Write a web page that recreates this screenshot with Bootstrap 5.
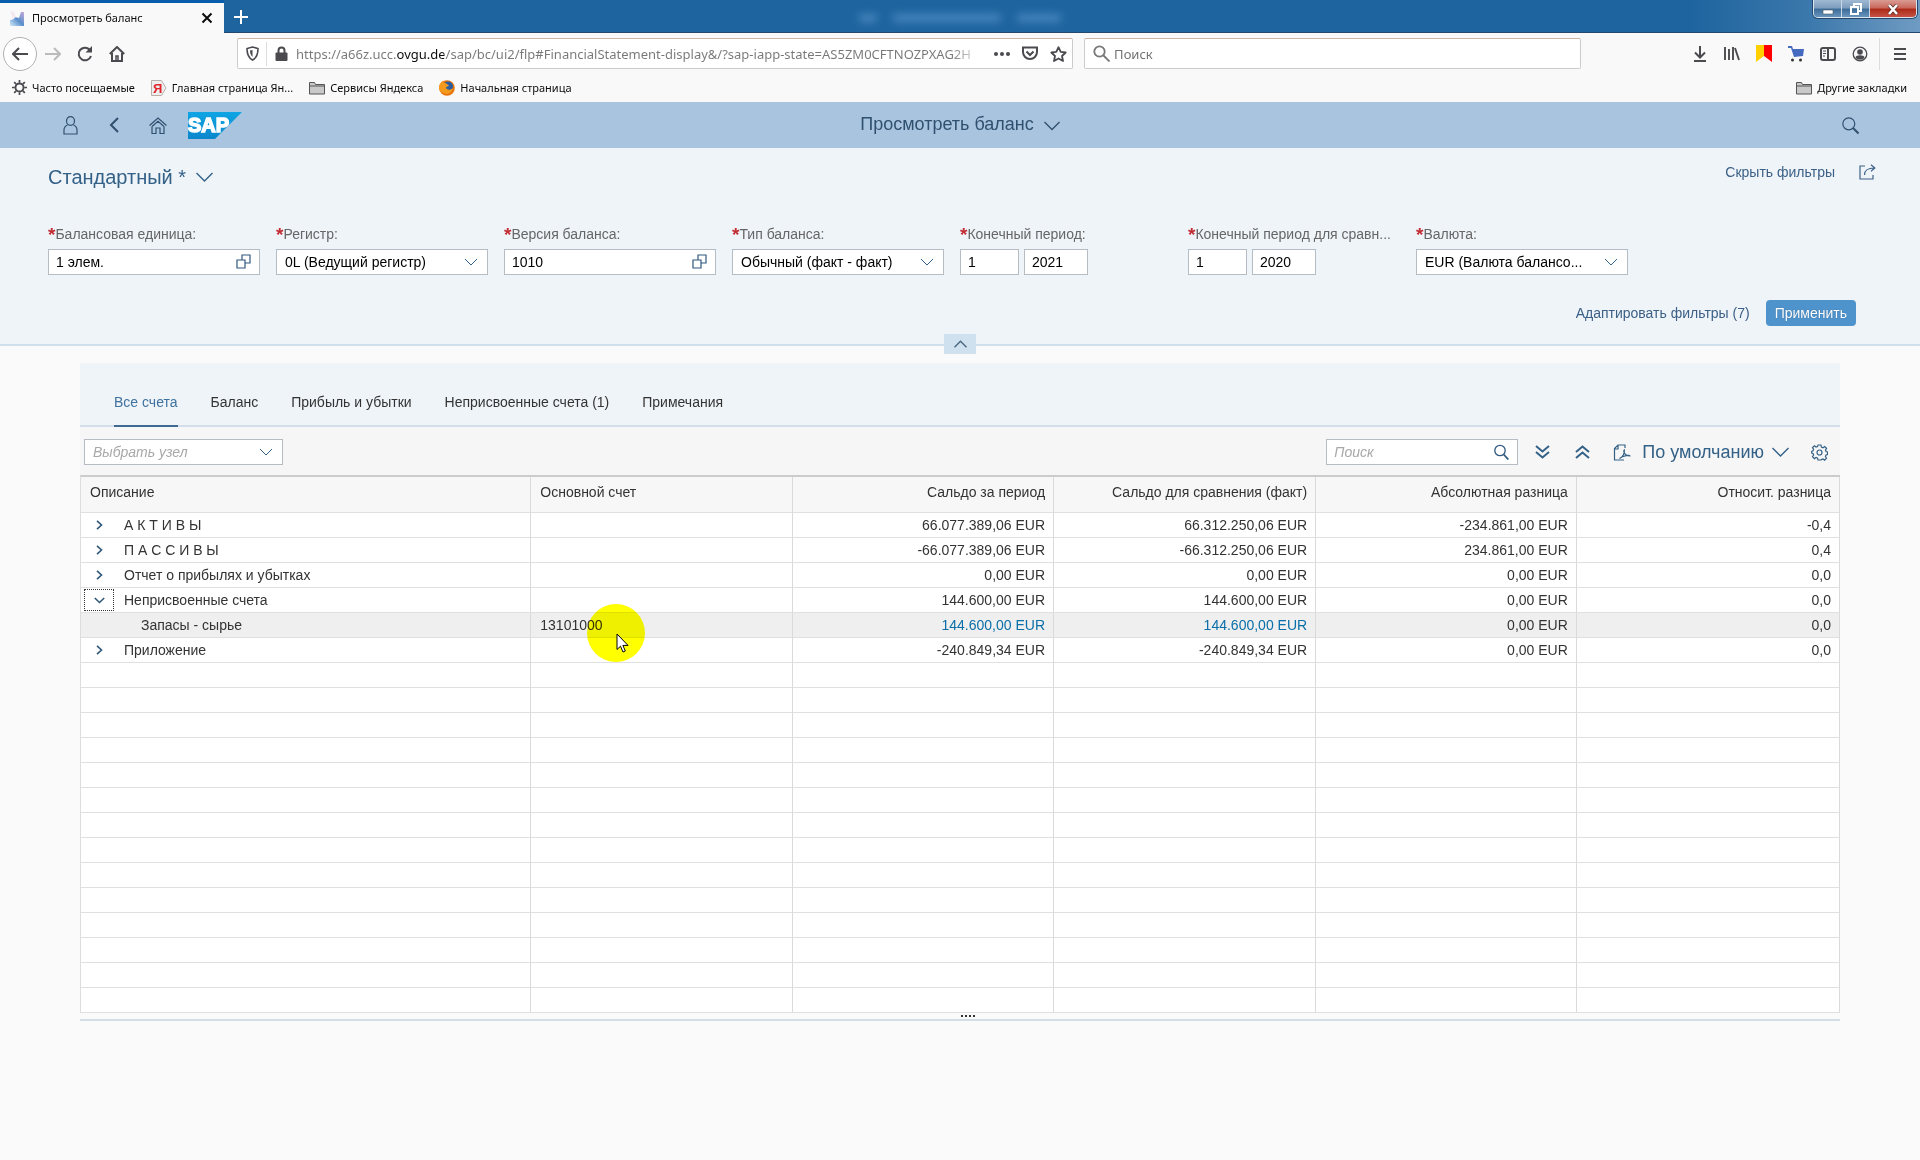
<!DOCTYPE html>
<html lang="ru">
<head>
<meta charset="utf-8">
<meta name="viewport" content="width=device-width, initial-scale=1">
<title>Просмотреть баланс</title>
<link rel="stylesheet" href="https://cdn.jsdelivr.net/npm/bootstrap@5.3.0/dist/css/bootstrap.min.css">
<style>
  :root { --ink:#333; --brand:#346187; --line:#e0e0e0; --panel:#eff4f9; --chrome:#f9f9fa; --chrome-ink:#4a4a4f; }
  body { background:#fafafa; color:var(--ink); font:14px/20px "Liberation Sans", Arial, sans-serif; min-height:100vh; }
  svg { display:block; flex:none; }
  button, input, select { font:inherit; }
  .plain-btn { border:0; background:none; padding:0; color:inherit; display:flex; align-items:center; justify-content:center; }
  .ln { fill:none; stroke:currentColor; }

  /* browser window */
  .browser { background:var(--chrome); color:#0c0c0d; font-family:"Noto Sans", "Open Sans", sans-serif; font-size:11px; }
  .title-strip { height:33px; background:linear-gradient(90deg,#1e649e 0,#1e649e 88%,#3a77ab 94%,#6f9bc2 100%); border-bottom:1px solid #25496d; position:relative; }
  .page-tab { width:224px; height:33px; background:var(--chrome); border-top:3px solid #0a5cad; padding:0 11px 0 10px; }
  .new-tab { width:34px; height:33px; color:#fff; }
  .blurred { left:0; right:0; top:14px; height:9px; filter:blur(4px); opacity:.75; }
  .blurred span { background:#5591c9; height:8px; }
  .win-ctl { border:1px solid #dbe6f0; border-top:0; border-radius:0 0 5px 5px; overflow:hidden; height:18px; margin-right:3px; color:#fff; box-shadow:0 0 0 1px #24476b; }
  .win-ctl button { height:18px; width:28px; background:linear-gradient(#9fb9d2 0,#7c9cbc 45%,#3c6b99 50%,#6f9bc0 100%); border-right:1px solid #c9d8e6; }
  .win-ctl button:last-child { width:46px; border-right:0; background:linear-gradient(#d99c93 0,#c9665a 45%,#ad2a17 50%,#c9574a 100%); }
  .nav-bar { height:39px; color:var(--chrome-ink); margin-top:1px; }
  .nav-left { width:237px; padding-left:3px; }
  .nav-left button { width:32px; height:32px; }
  .nav-left .back-btn { width:34px; height:34px; border:1px solid #b1b1b3; border-radius:50%; background:#fff; }
  .field-box { height:31px; background:#fff; border:1px solid #ccc; border-top-color:#c9b5a8; border-radius:2px; }
  .url-box { flex:836 1 0; }
  .find-box { flex:496 1 0; margin-left:11px; }
  .shield { width:29px; height:24px; border-right:1px solid #ddd; }
  .url-box button { width:28px; }
  .bare-input { border:0; outline:0; background:none; padding:0; min-width:0; flex:1; font-size:13px; }
  .bare-input::placeholder { color:#737373; opacity:1; }
  .url-input { -webkit-text-fill-color:transparent; color:transparent; -webkit-background-clip:text; background-clip:text;
    background-image:linear-gradient(90deg,#777 0,#777 101px,#0c0c0d 101px,#0c0c0d 148px,#777 148px,#777 calc(100% - 34px),#fff 100%); }
  .nav-right { width:339px; padding-right:1px; }
  .nav-right button { width:32px; height:32px; }
  .nav-right .menu-btn { width:40px; border-left:1px solid #ddd; margin-left:3px; }
  .bookmarks { height:29px; padding:0 13px 0 12px; gap:16px; }
  .bookmarks a { color:#0c0c0d; text-decoration:none; gap:5px; display:flex; align-items:center; white-space:nowrap; }

  /* shell header */
  .shell { height:46px; background:#a9c4df; color:#30506f; }
  .shell-side { flex:1 1 0; }
  .shell-side button { width:44px; height:44px; }
  .shell-title { font-size:18px; gap:10px; padding-bottom:2px; }

  /* filter bar */
  .filter-bar { background:var(--panel); border-bottom:2px solid #d0dfec; height:198px; padding:0 40px 0 48px; position:relative; }
  .variant { font-size:20px; line-height:24px; color:var(--brand); gap:10px; }
  .variant-row { height:57px; }
  .variant-tools { padding-bottom:10px; }
  .text-btn { color:#3c6086; }
  .filter-items { display:grid; grid-template-columns:repeat(8, 228px); padding-top:19px; }
  .filter-items .item { width:212px; }
  .filter-items label { display:block; height:20px; margin:0 0 5px; font-size:14px; line-height:20px; color:#666; white-space:nowrap; }
  .filter-items label::before { content:"*"; color:#c22d33; font-weight:bold; font-size:19px; line-height:16px; vertical-align:-2px; }
  .ctl { height:26px; border:1px solid #b5bcc4; border-radius:0; background-color:#fff; padding:0 7px; font-size:14px; line-height:20px; color:#000; min-height:0; }
  .ctl::placeholder { color:#a8a8a8; font-style:italic; opacity:1; }
  .period { width:59px; }
  .year { width:64px; }
  .period-pair { gap:5px; }
  select.ctl { padding-left:8px; padding-right:42px; text-overflow:ellipsis; background-repeat:no-repeat; background-position:right 9px center; background-size:14px 14px;
    --bs-form-select-bg-img:url("data:image/svg+xml,%3Csvg xmlns='http://www.w3.org/2000/svg' viewBox='0 0 14 14' fill='none' stroke='%23346187'%3E%3Cpath d='M1 4l6 6 6-6'/%3E%3C/svg%3E"); background-image:var(--bs-form-select-bg-img); }
  .with-help { position:relative; }
  .with-help button { position:absolute; right:9px; top:5px; color:#30597f; }
  .apply-btn { background:#4f93cc; color:#fff; border:0; border-radius:4px; height:26px; padding:0 9px; line-height:26px; text-shadow:0 0 1px #2b5f8f; }
  .filter-actions { padding:25px 24px 0 0; gap:16px; }
  .collapse-btn { position:absolute; left:50%; bottom:-10px; width:32px; height:20px; margin-left:-16px; background:#cfe0ee; color:#4a6680; }

  /* content */
  .content { margin:17px 80px 0; background:#f6f6f6; }
  .tab-strip { height:64px; background:var(--panel); border-bottom:2px solid #d3deea; padding:0 34px; gap:33px; }
  .tab-strip button { height:64px; padding-top:16px; border-bottom:2px solid transparent; }
  .tab-strip .active { color:#3f729f; border-color:#3f6a92; }
  .table-bar { height:48px; padding:2px 12px 0 4px; }
  .node-select { width:199px; font-style:italic; color:#a8a8a8; }
  .search-box { width:192px; }
  .bar-icon { width:40px; color:var(--brand); }
  .layout-btn { font-size:18px; color:var(--brand); gap:8px; }
  .gear-btn { margin-left:22px; color:var(--brand); }
  .ledger { width:100%; table-layout:fixed; border-collapse:separate; border-spacing:0; border-top:2px solid #ccc; border-left:1px solid #ddd; background:#fff; margin:0; }
  .ledger th, .ledger td { border-bottom:1px solid var(--line); border-right:1px solid #dadada; height:25px; padding:0 8px 0 9px; font-weight:400; line-height:20px; white-space:nowrap; }
  .ledger th { height:36px; background:#f7f7f7; padding-bottom:6px; }
  .ledger th:nth-child(n+3), .ledger td:nth-child(n+3) { text-align:right; }
  .ledger .picked td { background:#efefef; }
  .ledger td a { color:#0a6ea8; text-decoration:none; }
  .node { display:flex; align-items:center; gap:10px; height:24px; margin-left:-6px; }
  .node button { width:30px; height:22px; color:#2f5777; border:1px dotted transparent; }
  .node button.focused { border-color:#333; }
  .leaf { padding-left:51px; }
  .spot-cell { position:relative; }
  .spot { position:absolute; left:56px; top:-9px; z-index:2; mix-blend-mode:multiply; }
  .pointer { position:absolute; left:85px; top:20px; z-index:3; }
  .grip { height:8px; background:#fafafa; border-bottom:2px solid #d3dfe6; }
</style>
</head>
<body>
<header class="browser">
  <div class="title-strip d-flex align-items-start">
    <div class="blurred position-absolute d-flex justify-content-center gap-3">
      <span style="width:18px"></span><span style="width:108px"></span><span style="width:44px"></span>
    </div>
    <div class="page-tab d-flex align-items-center position-relative">
      <svg width="14" height="15" viewBox="0 0 14 15"><defs><linearGradient id="fav" x1="0" y1="1" x2="1" y2="0"><stop offset="0" stop-color="#d3ecf8"/><stop offset=".5" stop-color="#5a8fcc"/><stop offset="1" stop-color="#c7a9d8"/></linearGradient></defs><path d="M0 9c3 0 4-1 5-3l4 1 2-6h3v14H0z" fill="url(#fav)"/><path d="M0 0l4 1 2 5-3 2z" fill="#f3e8ee"/></svg>
      <span class="ms-1 flex-fill ps-1">Просмотреть баланс</span>
      <button class="plain-btn" aria-label="Закрыть вкладку"><svg width="12" height="12" viewBox="0 0 12 12" class="ln" stroke-width="2"><path d="M1.500 1.500l9 9M10.500 1.500l-9 9"/></svg></button>
    </div>
    <button class="plain-btn new-tab position-relative" aria-label="Новая вкладка"><svg width="14" height="14" viewBox="0 0 14 14" class="ln" stroke-width="2"><path d="M7 0v14M0 7h14"/></svg></button>
    <div class="win-ctl d-flex ms-auto position-relative">
      <button class="plain-btn" aria-label="Свернуть"><svg width="12" height="12" viewBox="0 0 12 12"><path d="M1 7h10v4H1z" fill="#fff" stroke="#4a5a6a" stroke-width=".6"/></svg></button>
      <button class="plain-btn" aria-label="Развернуть"><svg width="12" height="12" viewBox="0 0 12 12" class="ln" stroke-width="2"><path d="M4 3V1h7v7H9M1 4h7v7H1z"/></svg></button>
      <button class="plain-btn" aria-label="Закрыть"><svg width="12" height="11" viewBox="0 0 12 11" class="ln"><path d="M2 1l8 9M10 1l-8 9" stroke="#5c2b28" stroke-width="4"/><path d="M2 1l8 9M10 1l-8 9" stroke-width="2.600"/></svg></button>
    </div>
  </div>

  <div class="nav-bar d-flex align-items-center">
    <div class="nav-left d-flex align-items-center">
      <button class="plain-btn back-btn" aria-label="Назад"><svg width="16" height="14" viewBox="0 0 16 14" class="ln" stroke-width="2"><path d="M16 7H1M7 1L1 7l6 6"/></svg></button>
      <button class="plain-btn" aria-label="Вперёд"><svg width="16" height="14" viewBox="0 0 16 14" fill="none" stroke="#bbb" stroke-width="2"><path d="M0 7h15M9 1l6 6-6 6"/></svg></button>
      <button class="plain-btn" aria-label="Обновить"><svg width="16" height="16" viewBox="0 0 16 16" class="ln" stroke-width="2"><path d="M14 10A6.300 6.300 0 1 1 12.500 3.500L14 5"/><path d="M15 0v6.500H8.500z" fill="currentColor" stroke="none"/></svg></button>
      <button class="plain-btn" aria-label="Домой"><svg width="16" height="16" viewBox="0 0 16 16" class="ln" stroke-width="2"><path d="M0.800 8L8 1l7.200 7M3 7v8h10V7"/><path d="M7 15v-5h2v5" stroke-width="1.500"/></svg></button>
    </div>
    <div class="field-box url-box d-flex align-items-center">
      <div class="shield d-flex align-items-center justify-content-center"><svg width="13" height="15" viewBox="0 0 13 15" class="ln" stroke-width="1.600"><path d="M6.500 1L12 2.500c0 6-1.500 9.500-5.500 11.500C2.500 12 1 8.500 1 2.500z"/><path d="M6.500 4v7C5 9.500 4 7.500 4 4.500z" fill="currentColor" stroke="none"/></svg></div>
      <svg class="mx-2" width="13" height="15" viewBox="0 0 13 15"><path d="M3.500 7V4.500a3 3 0 0 1 6 0V7" fill="none" stroke="#4a4a4f" stroke-width="2"/><rect x="0.500" y="6.500" width="12" height="8.500" rx="1" fill="#4a4a4f"/></svg>
      <input class="bare-input url-input" type="text" aria-label="Адрес" value="https://a66z.ucc.ovgu.de/sap/bc/ui2/flp#FinancialStatement-display&amp;/?sap-iapp-state=AS5ZM0CFTNOZPXAG2H">
      <button class="plain-btn ms-1" aria-label="Действия"><svg width="16" height="4" viewBox="0 0 16 4" fill="currentColor"><circle cx="2" cy="2" r="2"/><circle cx="8" cy="2" r="2"/><circle cx="14" cy="2" r="2"/></svg></button>
      <button class="plain-btn" aria-label="Pocket"><svg width="16" height="15" viewBox="0 0 16 15" class="ln" stroke-width="2"><path d="M1 1.500h14V6a7 7 0 0 1-14 0z"/><path d="M4.500 5.500L8 9l3.500-3.500"/></svg></button>
      <button class="plain-btn" aria-label="Добавить в закладки"><svg width="17" height="16" viewBox="0 0 17 16" class="ln" stroke-width="1.800" stroke-linejoin="round"><path d="M8.500 1.200l2.200 4.700 5 .6-3.700 3.500 1 5-4.500-2.500L4 15l1-5L1.300 6.500l5-.6z"/></svg></button>
    </div>
    <div class="field-box find-box d-flex align-items-center">
      <svg class="ms-2 me-1" width="17" height="17" viewBox="0 0 17 17" fill="none" stroke="#777" stroke-width="1.800"><circle cx="6.500" cy="6.500" r="5.200"/><path d="M10.500 10.500l6 6"/></svg>
      <input class="bare-input" type="search" aria-label="Поиск в интернете" placeholder="Поиск">
    </div>
    <div class="nav-right d-flex align-items-center justify-content-end">
      <button class="plain-btn" aria-label="Загрузки"><svg width="14" height="16" viewBox="0 0 14 16" class="ln" stroke-width="2"><path d="M7 0v11M2 6.500l5 5 5-5M1 15h12"/></svg></button>
      <button class="plain-btn" aria-label="Библиотека"><svg width="16" height="15" viewBox="0 0 16 15" class="ln" stroke-width="1.900"><path d="M1 1v13M5 3v11M9 1v13M11 2l4 12"/></svg></button>
      <button class="plain-btn" aria-label="Яндекс Закладки"><svg width="16" height="17" viewBox="0 0 16 17"><path d="M0 0h8v11l-8 6z" fill="#ffcf00"/><path d="M8 0h8v17l-8-6z" fill="#f00"/></svg></button>
      <button class="plain-btn" aria-label="Корзина"><svg width="16" height="17" viewBox="0 0 16 17"><path d="M0 1h4l1 3h11l-1 7-9 1-3-9H0z" fill="#456bc0"/><circle cx="4.500" cy="15" r="1.500" fill="#333"/><circle cx="12.500" cy="15" r="1.500" fill="#333"/></svg></button>
      <button class="plain-btn" aria-label="Боковая панель"><svg width="16" height="14" viewBox="0 0 16 14" class="ln" stroke-width="2"><rect x="1" y="1" width="14" height="12" rx="2"/><path d="M8 1v12"/><path d="M3 4h3M3 6.500h3M3 9h2" stroke-width="1"/></svg></button>
      <button class="plain-btn" aria-label="Аккаунт"><svg width="16" height="16" viewBox="0 0 16 16"><circle cx="8" cy="8" r="6.800" fill="none" stroke="currentColor" stroke-width="1.300"/><circle cx="8" cy="6" r="2.800" fill="currentColor"/><path d="M3.500 11.500c0-3 9-3 9 0-2 3-7 3-9 0z" fill="currentColor"/></svg></button>
      <button class="plain-btn menu-btn" aria-label="Меню"><svg width="12" height="12" viewBox="0 0 12 12" class="ln" stroke-width="2"><path d="M0 1h12M0 6h12M0 11h12"/></svg></button>
    </div>
  </div>

  <nav class="bookmarks d-flex align-items-center" aria-label="Закладки">
    <a href="#"><svg width="15" height="15" viewBox="0 0 16 16" fill="none" stroke="#4a4a4f"><circle cx="8" cy="8" r="4.300" stroke-width="2"/><path d="M8 0v3M8 13v3M0 8h3M13 8h3M2.300 2.300l2.200 2.200M11.500 11.500l2.200 2.200M2.300 13.700l2.200-2.200M11.500 4.500l2.200-2.200" stroke-width="1.800"/></svg>Часто посещаемые</a>
    <a href="#"><svg width="16" height="16" viewBox="0 0 16 16"><path d="M.5.500h10L15 8l-4.500 7.500H.5z" fill="#eee" stroke="#b8b0a8"/><text x="2" y="13" font-family="Liberation Sans" font-weight="bold" font-size="13" fill="#e0242a">Я</text></svg>Главная страница Ян...</a>
    <a href="#"><svg width="16" height="14" viewBox="0 0 16 14"><path d="M.5 13V1.500h5l1 2h9V13z" fill="#c9c9c9" stroke="#555"/><path d="M.5 5h15" stroke="#555"/></svg>Сервисы Яндекса</a>
    <a href="#"><svg width="16" height="16" viewBox="0 0 16 16"><circle cx="8" cy="8" r="7.800" fill="#e8740c"/><circle cx="9" cy="6.500" r="5" fill="#2a5d9f"/><path d="M0 6c1-3 3-5 4-5l1 2c3 0 4 2 5 3l-3 1c0 3 4 4 7 1-1 5-6 7-10 5S0 9 0 6z" fill="#f39a1c"/></svg>Начальная страница</a>
    <a href="#" class="ms-auto"><svg width="16" height="14" viewBox="0 0 16 14"><path d="M.5 13V1.500h5l1 2h9V13z" fill="#c9c9c9" stroke="#555"/><path d="M.5 5h15" stroke="#555"/></svg>Другие закладки</a>
  </nav>
</header>

<div class="shell d-flex align-items-center">
  <div class="shell-side d-flex align-items-center ps-5">
    <button class="plain-btn" aria-label="Профиль"><svg width="15" height="19" viewBox="0 0 15 19" class="ln" stroke-width="1.200"><ellipse cx="7.500" cy="5" rx="4" ry="4.400"/><path d="M4.500 9C2 10 1 12 1 14v4h13v-4c0-2-1-4-3.500-5"/></svg></button>
    <button class="plain-btn" aria-label="Назад"><svg width="10" height="16" viewBox="0 0 10 16" class="ln" stroke-width="2"><path d="M9 1L2 8l7 7"/></svg></button>
    <button class="plain-btn" aria-label="Главная"><svg width="18" height="17" viewBox="0 0 18 17" class="ln" stroke-width="1.200"><path d="M.5 8.500L9 1l8.500 7.500M3 9.500L9 4.300l6 5.200M3 9.500v7h4V11h4v5.500h4v-7"/></svg></button>
    <svg class="ms-2" width="54" height="27" viewBox="0 0 54 27" role="img" aria-label="SAP"><defs><linearGradient id="sap" x1="0" y1="0" x2="0" y2="1"><stop offset="0" stop-color="#10a5e4"/><stop offset="1" stop-color="#0a86cc"/></linearGradient></defs><path d="M0 0h54L27 27H0z" fill="url(#sap)"/><text x="0" y="20" font-family="Liberation Sans" font-weight="bold" font-size="20" fill="#fff" stroke="#fff" stroke-width="1.500">SAP</text></svg>
  </div>
  <button class="plain-btn shell-title">Просмотреть баланс <svg class="mt-1 ln" width="16" height="10" viewBox="0 0 16 10" stroke-width="1.300"><path d="M.5 1L8 8.500 15.500 1"/></svg></button>
  <div class="shell-side d-flex justify-content-end pe-5">
    <button class="plain-btn" aria-label="Поиск"><svg width="17" height="17" viewBox="0 0 17 17" class="ln" stroke-width="1.200"><circle cx="6.800" cy="6.800" r="6"/><path d="M11 11l5.500 5.500" stroke-width="2"/></svg></button>
  </div>
</div>

<main>
  <section class="filter-bar">
    <div class="variant-row d-flex align-items-center justify-content-between">
      <button class="plain-btn variant">Стандартный * <svg width="17" height="10" viewBox="0 0 17 10" class="ln" stroke-width="1.400"><path d="M.5 1l8 8 8-8"/></svg></button>
      <div class="variant-tools d-flex align-items-center gap-4 text-btn">
        <button class="plain-btn">Скрыть фильтры</button>
        <button class="plain-btn me-1" aria-label="Поделиться"><svg width="17" height="16" viewBox="0 0 17 16" class="ln" stroke-width="1.200"><path d="M6 2H1v13h13v-4M5.500 11c0-5 3-7 10-7M12 .8L15.800 4 12 7.200"/></svg></button>
      </div>
    </div>
    <form class="filter-items">
      <div class="item"><label for="f1">Балансовая единица:</label><div class="with-help"><input id="f1" class="ctl w-100" value="1 элем."><button type="button" class="plain-btn" aria-label="Выбрать"><svg width="15" height="15" viewBox="0 0 15 15" class="ln" stroke-width="1.200"><path d="M1 6h8v8H1zM6 6V1h8v8H9"/></svg></button></div></div>
      <div class="item"><label for="f2">Регистр:</label><select id="f2" class="form-select ctl"><option>0L (Ведущий регистр)</option></select></div>
      <div class="item"><label for="f3">Версия баланса:</label><div class="with-help"><input id="f3" class="ctl w-100" value="1010"><button type="button" class="plain-btn" aria-label="Выбрать"><svg width="15" height="15" viewBox="0 0 15 15" class="ln" stroke-width="1.200"><path d="M1 6h8v8H1zM6 6V1h8v8H9"/></svg></button></div></div>
      <div class="item"><label for="f4">Тип баланса:</label><select id="f4" class="form-select ctl"><option>Обычный (факт - факт)</option></select></div>
      <div class="item"><label for="f5">Конечный период:</label><div class="period-pair d-flex"><input id="f5" class="ctl period" value="1"><input class="ctl year" value="2021" aria-label="Год"></div></div>
      <div class="item"><label for="f6">Конечный период для сравн...</label><div class="period-pair d-flex"><input id="f6" class="ctl period" value="1"><input class="ctl year" value="2020" aria-label="Год сравнения"></div></div>
      <div class="item"><label for="f7">Валюта:</label><select id="f7" class="form-select ctl"><option>EUR (Валюта балансо...</option></select></div>
    </form>
    <div class="filter-actions d-flex justify-content-end align-items-center">
      <button class="plain-btn text-btn">Адаптировать фильтры (7)</button>
      <button class="apply-btn">Применить</button>
    </div>
    <button class="plain-btn collapse-btn" aria-label="Свернуть фильтры"><svg width="13" height="8" viewBox="0 0 13 8" class="ln" stroke-width="1.400"><path d="M.5 7.200l6-6 6 6"/></svg></button>
  </section>

  <section class="content">
    <div class="tab-strip d-flex" role="tablist">
      <button class="plain-btn active" role="tab">Все счета</button>
      <button class="plain-btn" role="tab">Баланс</button>
      <button class="plain-btn" role="tab">Прибыль и убытки</button>
      <button class="plain-btn" role="tab">Неприсвоенные счета (1)</button>
      <button class="plain-btn" role="tab">Примечания</button>
    </div>
    <div class="table-bar d-flex align-items-center">
      <select class="form-select ctl node-select" aria-label="Выбрать узел"><option>Выбрать узел</option></select>
      <div class="with-help search-box ms-auto"><input class="ctl w-100" type="search" placeholder="Поиск" aria-label="Поиск"><button class="plain-btn" aria-label="Найти"><svg width="15" height="16" viewBox="0 0 15 16" class="ln" stroke-width="1.300"><circle cx="6" cy="6.500" r="5.200"/><path d="M9.800 10.500l4.500 5" stroke-width="1.800"/></svg></button></div>
      <div class="d-flex align-items-center ms-1">
        <button class="plain-btn bar-icon" aria-label="Развернуть все"><svg width="15" height="14" viewBox="0 0 15 14" class="ln" stroke-width="2"><path d="M1 1l6.500 5.500L14 1M1 7l6.500 5.500L14 7"/></svg></button>
        <button class="plain-btn bar-icon" aria-label="Свернуть все"><svg width="15" height="14" viewBox="0 0 15 14" class="ln" stroke-width="2"><path d="M1 7l6.500-5.500L14 7M1 13l6.500-5.500L14 13"/></svg></button>
        <button class="plain-btn bar-icon" aria-label="Экспорт в PDF"><svg width="18" height="17" viewBox="0 0 18 17" class="ln" stroke-width="1.200"><path d="M12 4V1H5L1.500 4.500V16H11M5 1v4H1.500"/><path d="M6.500 14.500c3-1.500 5.500-5 4.800-8.500-1.300 1.500.5 6 5.700 6 0-1.500-7-.5-10.500 2.500z"/></svg></button>
      </div>
      <button class="plain-btn layout-btn">По умолчанию <svg width="17" height="10" viewBox="0 0 17 10" class="ln" stroke-width="1.400"><path d="M.5 1l8 8 8-8"/></svg></button>
      <button class="plain-btn gear-btn" aria-label="Настройки"><svg width="17" height="17" viewBox="0 0 17 17" class="ln" stroke-width="1.200"><circle cx="8.500" cy="8.500" r="2.500"/><path d="M7 1h3l.4 2 1.600.7 1.700-1.200 1.900 1.900-1.200 1.700.7 1.500 1.400.4v2.500l-1.500.5-.6 1.500 1.100 1.700-1.900 1.900-1.700-1.200-1.500.7L10 16H7l-.4-1.900-1.500-.7-1.700 1.200-1.900-1.900 1.100-1.700L2 9.500.700 9V7.500L2 6.900l.6-1.500-1.100-1.700 1.900-1.900L5 3l1.600-.5z"/></svg></button>
    </div>
    <table class="ledger">
      <colgroup><col style="width:25.600%"><col style="width:14.900%"><col style="width:14.820%"><col style="width:14.900%"><col style="width:14.820%"><col></colgroup>
      <thead><tr><th>Описание</th><th>Основной счет</th><th>Сальдо за период</th><th>Сальдо для сравнения (факт)</th><th>Абсолютная разница</th><th>Относит. разница</th></tr></thead>
      <tbody>
        <tr><td><div class="node"><button class="plain-btn" aria-label="Развернуть"><svg width="7" height="10" viewBox="0 0 7 10" class="ln" stroke-width="1.600"><path d="M1 .8L5.500 5 1 9.200"/></svg></button>А К Т И В Ы</div></td><td></td><td>66.077.389,06 EUR</td><td>66.312.250,06 EUR</td><td>-234.861,00 EUR</td><td>-0,4</td></tr>
        <tr><td><div class="node"><button class="plain-btn" aria-label="Развернуть"><svg width="7" height="10" viewBox="0 0 7 10" class="ln" stroke-width="1.600"><path d="M1 .8L5.500 5 1 9.200"/></svg></button>П А С С И В Ы</div></td><td></td><td>-66.077.389,06 EUR</td><td>-66.312.250,06 EUR</td><td>234.861,00 EUR</td><td>0,4</td></tr>
        <tr><td><div class="node"><button class="plain-btn" aria-label="Развернуть"><svg width="7" height="10" viewBox="0 0 7 10" class="ln" stroke-width="1.600"><path d="M1 .8L5.500 5 1 9.200"/></svg></button>Отчет о прибылях и убытках</div></td><td></td><td>0,00 EUR</td><td>0,00 EUR</td><td>0,00 EUR</td><td>0,0</td></tr>
        <tr><td><div class="node"><button class="plain-btn focused" aria-label="Свернуть"><svg width="11" height="7" viewBox="0 0 11 7" class="ln" stroke-width="1.600"><path d="M.8 1l4.700 4.500L10.200 1"/></svg></button>Неприсвоенные счета</div></td><td></td><td>144.600,00 EUR</td><td>144.600,00 EUR</td><td>0,00 EUR</td><td>0,0</td></tr>
        <tr class="picked"><td><div class="leaf">Запасы - сырье</div></td>
          <td class="spot-cell">13101000
            <svg class="spot" width="58" height="58" viewBox="0 0 58 58"><circle cx="29" cy="29" r="29" fill="#ffff00"/></svg>
            <svg class="pointer" width="13" height="20" viewBox="0 0 13 20"><path d="M1 1v15.500l3.500-3.300 2.500 5.800 2.300-1-2.400-5.600H12z" fill="#fff" stroke="#000"/></svg></td>
          <td><a href="#">144.600,00 EUR</a></td><td><a href="#">144.600,00 EUR</a></td><td>0,00 EUR</td><td>0,0</td></tr>
        <tr><td><div class="node"><button class="plain-btn" aria-label="Развернуть"><svg width="7" height="10" viewBox="0 0 7 10" class="ln" stroke-width="1.600"><path d="M1 .8L5.500 5 1 9.200"/></svg></button>Приложение</div></td><td></td><td>-240.849,34 EUR</td><td>-240.849,34 EUR</td><td>0,00 EUR</td><td>0,0</td></tr>
        <tr><td></td><td></td><td></td><td></td><td></td><td></td></tr>
        <tr><td></td><td></td><td></td><td></td><td></td><td></td></tr>
        <tr><td></td><td></td><td></td><td></td><td></td><td></td></tr>
        <tr><td></td><td></td><td></td><td></td><td></td><td></td></tr>
        <tr><td></td><td></td><td></td><td></td><td></td><td></td></tr>
        <tr><td></td><td></td><td></td><td></td><td></td><td></td></tr>
        <tr><td></td><td></td><td></td><td></td><td></td><td></td></tr>
        <tr><td></td><td></td><td></td><td></td><td></td><td></td></tr>
        <tr><td></td><td></td><td></td><td></td><td></td><td></td></tr>
        <tr><td></td><td></td><td></td><td></td><td></td><td></td></tr>
        <tr><td></td><td></td><td></td><td></td><td></td><td></td></tr>
        <tr><td></td><td></td><td></td><td></td><td></td><td></td></tr>
        <tr><td></td><td></td><td></td><td></td><td></td><td></td></tr>
        <tr><td></td><td></td><td></td><td></td><td></td><td></td></tr>
      </tbody>
    </table>
    <div class="grip d-flex justify-content-center align-items-center ps-3"><svg width="14" height="2" viewBox="0 0 14 2" fill="#333"><path d="M0 0h2v2H0zM4 0h2v2H4zM8 0h2v2H8zM12 0h2v2h-2z"/></svg></div>
  </section>
</main>
<script src="https://cdn.jsdelivr.net/npm/bootstrap@5.3.0/dist/js/bootstrap.bundle.min.js"></script>
</body>
</html>
